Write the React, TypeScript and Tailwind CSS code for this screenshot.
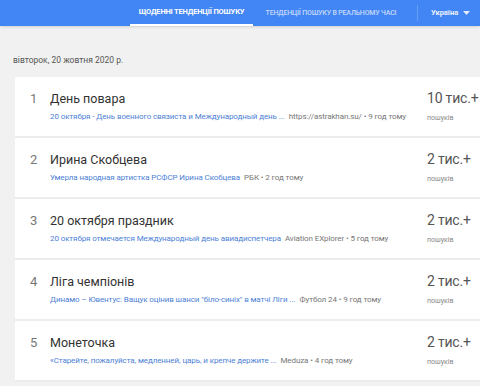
const items = [
  {
    n: 1,
    title: 'День повара',
    link: '20 октября - День военного связиста и Международный день ...',
    source: 'https://astrakhan.su/ • 9 год тому',
    count: '10 тис.+',
  },
  {
    n: 2,
    title: 'Ирина Скобцева',
    link: 'Умерла народная артистка РСФСР Ирина Скобцева',
    source: 'РБК • 2 год тому',
    count: '2 тис.+',
  },
  {
    n: 3,
    title: '20 октября праздник',
    link: '20 октября отмечается Международный день авиадиспетчера',
    source: 'Aviation EXplorer • 5 год тому',
    count: '2 тис.+',
  },
  {
    n: 4,
    title: 'Ліга чемпіонів',
    link: 'Динамо – Ювентус: Ващук оцінив шанси "біло-синіх" в матчі Ліги ...',
    source: 'Футбол 24 • 9 год тому',
    count: '2 тис.+',
  },
  {
    n: 5,
    title: 'Монеточка',
    link: '«Старейте, пожалуйста, медленней, царь, и крепче держите ...',
    source: 'Meduza • 4 год тому',
    count: '2 тис.+',
  },
];

export default function App() {
  return (
    <div className="w-[480px] h-[386px] overflow-hidden bg-[#f1f1f1] font-['Roboto',sans-serif]">
      {/* top bar */}
      <div className="h-[26px] bg-[#4285f4] flex items-stretch pl-[130px] shadow-sm">
        <div className="w-[123px] flex items-center justify-center border-b-2 border-white text-[7.5px] font-bold text-white tracking-tight">
          ЩОДЕННІ ТЕНДЕНЦІЇ ПОШУКУ
        </div>
        <div className="w-[156px] flex items-center justify-center text-[7px] font-medium text-white/70 tracking-tight">
          ТЕНДЕНЦІЇ ПОШУКУ В РЕАЛЬНОМУ ЧАСІ
        </div>
        <div className="w-px my-[5px] bg-white/20 ml-[8px]" />
        <div className="flex items-center gap-[5px] pl-[13px] text-[7.5px] font-bold text-white/90">
          Україна
          <svg width="7" height="4" viewBox="0 0 7 4">
            <path d="M0 0h7L3.5 4z" fill="#fff" fillOpacity="0.85" />
          </svg>
        </div>
      </div>

      <div className="pl-[13px] pt-[28px] text-[8.5px] text-[#555] leading-[12px]">вівторок, 20 жовтня 2020 р.</div>

      <div className="ml-[15px] mt-[11px] bg-white">
        {items.map((it) => (
          <div key={it.n} className="h-[61px] flex border-b-2 border-[#ececec]">
            <div className="w-[35px] pl-[15px] pt-[13px] text-[13px] leading-[18px] text-[#777]">{it.n}</div>
            <div className="flex-1 min-w-0 pt-[14px]">
              <div className="text-[12.5px] leading-[16px] text-[#333]">{it.title}</div>
              <div className="mt-[4px] text-[8px] leading-[12px] whitespace-nowrap tracking-[-0.1px]">
                <span className="text-[#4e7fd6]">{it.link}</span>
                <span className="text-[#777] ml-[4px]">{it.source}</span>
              </div>
            </div>
            <div className="w-[53px] pt-[11px]">
              <div className="text-[14px] leading-[20px] text-[#555] whitespace-nowrap tracking-[-0.2px]">{it.count}</div>
              <div className="mt-[5px] text-[7px] leading-[10px] text-[#888]">пошуків</div>
            </div>
          </div>
        ))}
      </div>
    </div>
  );
}
